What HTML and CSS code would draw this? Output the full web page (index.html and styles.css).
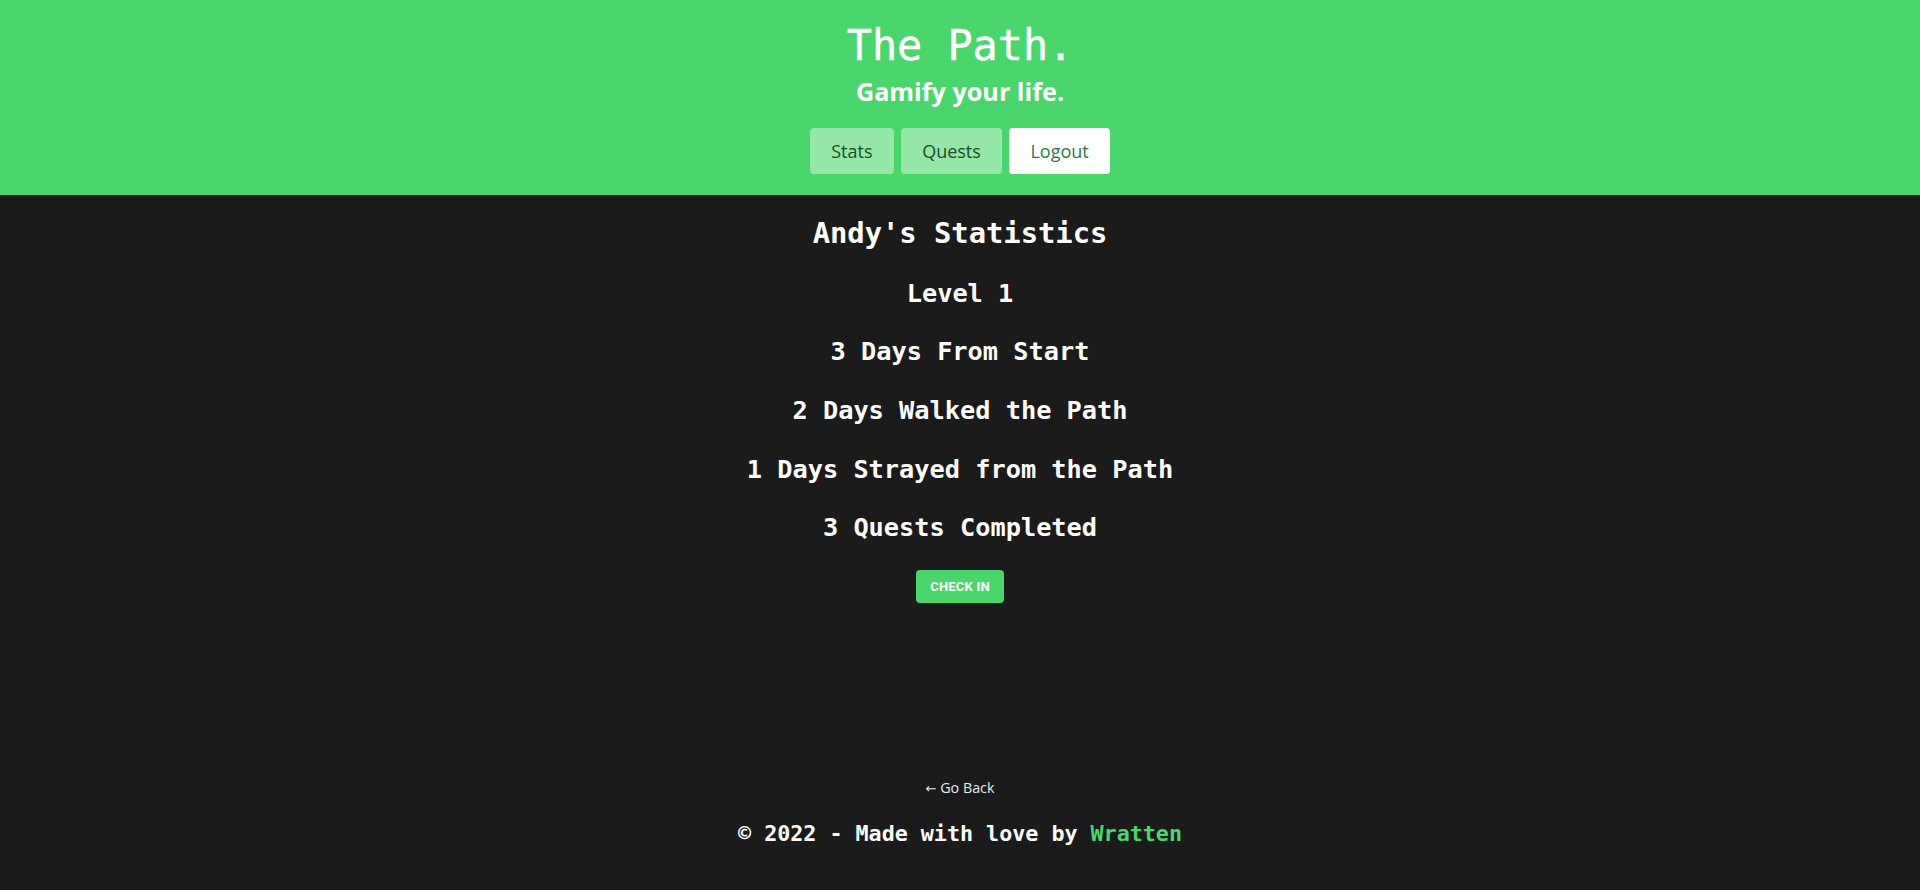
FILE: index.html
```html
<!DOCTYPE html>
<html lang="en">
<head>
<meta charset="utf-8">
<title>The Path.</title>
<link rel="stylesheet" href="styles.css">
</head>
<body>
<header class="site-header">
  <h1 class="site-title">The Path.</h1>
  <p class="site-tagline">Gamify your life.</p>
  <nav class="site-nav">
    <a class="nav-btn nav-btn--soft" href="#">Stats</a>
    <a class="nav-btn nav-btn--soft" href="#">Quests</a>
    <a class="nav-btn nav-btn--solid" href="#">Logout</a>
  </nav>
</header>
<main class="stats">
  <h2 class="stats-title">Andy's Statistics</h2>
  <h3 class="stat-line">Level 1</h3>
  <h3 class="stat-line">3 Days From Start</h3>
  <h3 class="stat-line">2 Days Walked the Path</h3>
  <h3 class="stat-line">1 Days Strayed from the Path</h3>
  <h3 class="stat-line">3 Quests Completed</h3>
  <button class="check-in" type="button">Check In</button>
</main>
<footer class="site-footer">
  <a class="go-back" href="#"><span class="go-back-arrow">←</span> Go Back</a>
  <p class="credit">© 2022 - Made with love by <a class="credit-link" href="#">Wratten</a></p>
</footer>
</body>
</html>
```

FILE: styles.css
```css
* { box-sizing: border-box; }

html, body {
  margin: 0;
  padding: 0;
}

body {
  min-height: 100vh;
  display: flex;
  flex-direction: column;
  background: #1b1b1b;
  color: #ffffff;
  font-family: "DejaVu Sans Mono", monospace;
}

.site-header {
  background: #4ad66d;
  display: flex;
  flex-direction: column;
  align-items: center;
  padding: 21px 0 21px;
}

.site-title {
  margin: 0;
  font-family: "DejaVu Sans Mono", monospace;
  font-weight: 400;
  font-size: 41.8px;
  line-height: 50px;
  color: #ffffff;
  -webkit-text-stroke: 0.4px #ffffff;
}

.site-tagline {
  margin: 5px 0 0;
  font-family: "Open Sans", sans-serif;
  font-weight: 700;
  font-size: 25.2px;
  line-height: 30px;
  color: #ffffff;
}

.site-nav {
  margin-top: 22px;
  display: flex;
  gap: 7px;
}

.nav-btn {
  display: flex;
  align-items: center;
  justify-content: center;
  height: 46px;
  padding: 0 21.3px;
  border-radius: 4px;
  font-family: "Open Sans", sans-serif;
  font-size: 18px;
  text-decoration: none;
}

.nav-btn--soft {
  background: #93e7a7;
  color: #1f4a2b;
}

.nav-btn--solid {
  background: #ffffff;
  color: #2c7a47;
}

.stats {
  flex: 1;
  display: flex;
  flex-direction: column;
  align-items: center;
  padding-top: 21px;
}

.stats-title {
  margin: 0;
  font-size: 28.8px;
  line-height: 34px;
  font-weight: 700;
}

.stat-line {
  margin: 28.7px 0 0;
  font-size: 25.3px;
  line-height: 30px;
  font-weight: 700;
}

.stats-title + .stat-line {
  margin-top: 28.6px;
}

.check-in {
  margin-top: 26.6px;
  width: 88px;
  height: 33px;
  border: none;
  border-radius: 4px;
  background: #4ad66d;
  color: #ffffff;
  font-family: Roboto, sans-serif;
  font-weight: 700;
  font-size: 13px;
  letter-spacing: 0.2px;
  text-transform: uppercase;
  cursor: pointer;
}

.site-footer {
  display: flex;
  flex-direction: column;
  align-items: center;
  padding-bottom: 43px;
}

.go-back {
  font-family: "Open Sans", sans-serif;
  font-size: 14.3px;
  line-height: 20px;
  color: #e6ecf0;
  text-decoration: none;
}

.go-back-arrow {
  font-family: "DejaVu Sans", sans-serif;
  font-size: 13px;
}

.credit {
  margin: 22px 0 0;
  font-size: 21.7px;
  line-height: 26px;
  font-weight: 700;
}

.credit-link {
  color: #4ad66d;
  text-decoration: none;
}
```
